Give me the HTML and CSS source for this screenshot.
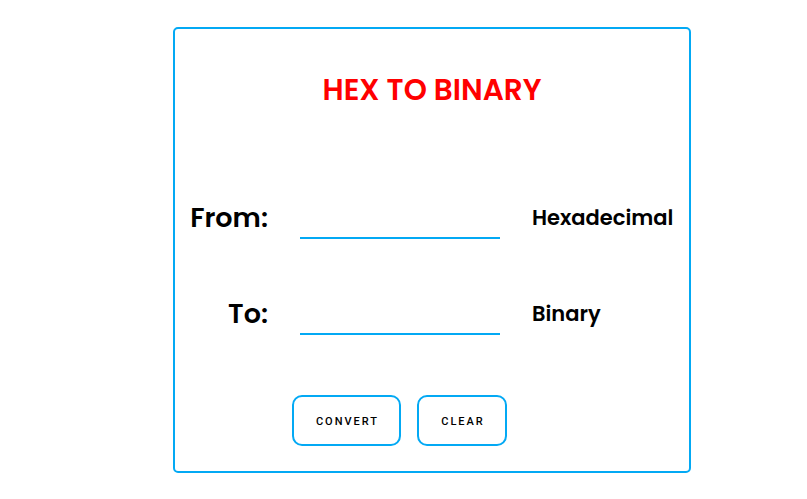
FILE: index.html
```html
<!DOCTYPE html>
<html>
<head>
<meta charset="utf-8">
<link rel="stylesheet" href="styles.css">
</head>
<body>
<div class="card">
  <h1 class="title">HEX TO BINARY</h1>
  <div class="rows">
    <div class="row">
      <label class="label">From:</label>
      <input class="field" type="text">
      <span class="unit">Hexadecimal</span>
    </div>
    <div class="row row-to">
      <label class="label">To:</label>
      <input class="field" type="text">
      <span class="unit">Binary</span>
    </div>
  </div>
  <div class="buttons">
    <button class="btn btn-convert">CONVERT</button>
    <button class="btn btn-clear">CLEAR</button>
  </div>
</div>
</body>
</html>
```
FILE: styles.css
```css
html, body {
  margin: 0;
  padding: 0;
  background: #ffffff;
}
body {
  font-family: "Poppins", "Inter", "Open Sans", sans-serif;
  color: #000;
}
.card {
  box-sizing: border-box;
  margin: 27px 0 0 173px;
  width: 518px;
  height: 446px;
  border: 2px solid #03a9f4;
  border-radius: 5px;
  display: flex;
  flex-direction: column;
}
.title {
  margin: 0;
  padding-top: 41px;
  text-align: center;
  color: #ff0000;
  font-size: 29.5px;
  font-weight: 600;
  line-height: 40px;
  letter-spacing: 0;
}
.rows {
  margin-top: 83px;
  display: flex;
  flex-direction: column;
  gap: 50px;
}
.row {
  display: grid;
  grid-template-columns: 93px 200px auto;
  column-gap: 32px;
  align-items: center;
  height: 46px;
}
.label {
  text-align: right;
  font-size: 27px;
  font-weight: 600;
  line-height: 30px;
  margin-top: 4px;
}
.field {
  box-sizing: border-box;
  width: 200px;
  height: 30px;
  border: none;
  border-bottom: 2px solid #03a9f4;
  outline: none;
  background: transparent;
  align-self: end;
  margin-bottom: 0;
}
.unit {
  font-size: 21px;
  font-weight: 600;
  line-height: 26px;
  margin-top: 4px;
}
.buttons {
  margin-top: 60px;
  display: flex;
  gap: 16px;
  padding-left: 117px;
}
.btn {
  box-sizing: border-box;
  height: 51px;
  border: 2px solid #03a9f4;
  border-radius: 10px;
  background: #fff;
  font-family: "Roboto", "Liberation Sans", Arial, sans-serif;
  font-size: 11px;
  font-weight: 500;
  letter-spacing: 2px;
  color: #000;
  padding: 2px 0 0 2px;
}
.btn-convert { width: 109px; }
.btn-clear { width: 90px; }
```
